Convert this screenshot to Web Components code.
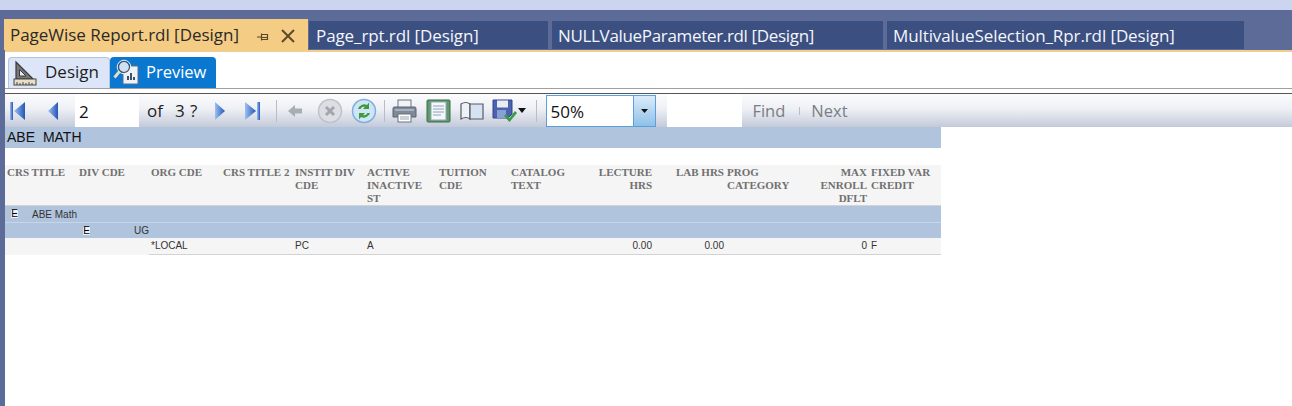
<!DOCTYPE html>
<html><head><meta charset="utf-8"><style>
html,body{margin:0;padding:0;height:406px;overflow:hidden;background:#fff;font-family:"Open Sans","Noto Sans",sans-serif}
</style></head><body>
<vs-window>
  <doc-tabs slot="tabs"></doc-tabs>
  <view-tabs slot="views"></view-tabs>
  <report-toolbar slot="toolbar"></report-toolbar>
  <report-body slot="body"></report-body>
</vs-window>
<script>
function def(name,html){customElements.define(name,class extends HTMLElement{constructor(){super();this.attachShadow({mode:'open'}).innerHTML=html;}});}

def('vs-window',`<style>
:host{display:flex;flex-direction:column;width:1292px;height:406px;background:#5d6b99;overflow:hidden}
.top{height:10px;background:#ccd5f0;flex:none}
.main{flex:1;display:flex;flex-direction:column;padding-left:5px;min-height:0}
.rest{flex:1;background:#fff;display:flex;flex-direction:column;min-height:0}
</style><div class="top"></div><div class="main"><slot name="tabs"></slot><div class="rest"><slot name="views"></slot><slot name="toolbar"></slot><slot name="body"></slot></div></div>`);

def('doc-tabs',`<style>
:host{display:block;padding-top:9px;margin-left:-1px}
.row{display:flex;height:31px;align-items:flex-end;gap:4px}
.tab{height:28px;margin-bottom:1px;background:#3b4f81;color:#f4f6fb;font-size:17px;letter-spacing:-.1px;line-height:30px;padding-left:6px;box-sizing:border-box;white-space:nowrap;overflow:hidden;flex:none}
.active{height:31px;margin:0 -3px 0 0;width:304px;background:#f5cc84;color:#2a2a2a;letter-spacing:-.03px;line-height:35px;padding-left:6px;display:flex;align-items:center}
.active span{width:246px;flex:none}
.line{height:2px;background:#f0cf8e;margin-left:1px}
svg{display:block;flex:none}
</style><div class="row">
<div class="tab active"><span>PageWise Report.rdl [Design]</span>
<svg width="14" height="14" viewBox="0 0 14 14" style="margin-top:4px"><path d="M1 7H5.500M5.500 3.500V10.500M6 4.500H11.500V9.500H6M6 7.500H11.500" fill="none" stroke="#5a4a2a" stroke-width="1.200"/></svg>
<svg width="16" height="16" viewBox="0 0 16 16" style="margin:3px 0 0 10px"><path d="M2 2L14 14M14 2L2 14" stroke="#5a4a2a" stroke-width="2"/></svg></div>
<div class="tab" style="width:239px;padding-left:7px">Page_rpt.rdl [Design]</div>
<div class="tab" style="width:331px;letter-spacing:-.33px">NULLValueParameter.rdl [Design]</div>
<div class="tab" style="width:357px">MultivalueSelection_Rpr.rdl [Design]</div>
</div><div class="line"></div>`);

def('view-tabs',`<style>
:host{display:block;height:37px;box-sizing:border-box;border-bottom:1px solid #a0a0a0}
.row{display:flex;padding:5px 0 0 3px;height:36px;box-sizing:border-box}
.t{height:31px;display:flex;align-items:center;font-size:17px;line-height:28px;box-sizing:border-box;border-radius:4px 4px 0 0}
.t span{display:block;margin-top:-2px}
.d{width:102px;background:#dce6f8;border:1px solid #b4c4de;border-bottom:0;color:#1e1e1e;padding-left:4px;gap:8px}
.p{width:106px;background:#0a78d0;color:#fff;padding-left:3px;gap:7px;font-size:16.500px}
svg{display:block;flex:none}
</style><div class="row">
<div class="t d"><svg width="24" height="27" viewBox="0 0 24 27"><path d="M3 2L3 19L20 19Z" fill="#77777a" stroke="#3a3a3a" stroke-width="1.200"/><path d="M6.500 9.500L6.500 16H13Z" fill="#e4ebf7" stroke="#3a3a3a"/><rect x="1" y="19" width="22" height="6" fill="#e8dfc8" stroke="#444"/><path d="M4 22V25M7 23V25M10 22V25M13 23V25M16 22V25M19 23V25" stroke="#444"/></svg><span>Design</span></div>
<div class="t p"><svg width="26" height="27" viewBox="0 0 26 27"><rect x="10" y="7" width="15" height="18" fill="#eef2f7" stroke="#5d6f8a"/><path d="M15 21V17M18 21V14M21 21V18" stroke="#39506e" stroke-width="2"/><circle cx="11" cy="8" r="5.500" fill="#cfe0f4" stroke="#3d4a5c" stroke-width="1.200"/><circle cx="11" cy="8" r="6.800" fill="none" stroke="#eaeff4"/><path d="M6.500 12.500L1.500 18.500" stroke="#e8dcc6" stroke-width="2.800"/></svg><span>Preview</span></div>
</div>`);

def('report-toolbar',`<style>
:host{display:block;margin-top:4px;height:34px;box-sizing:border-box;border-top:1px solid #555;background:linear-gradient(#fcfcfd,#eef0f5 45%,#c3cad9)}
.row{display:flex;align-items:center;height:33px}
.i{flex:none;display:block}
.box{background:#fff;align-self:stretch;flex:none;font-size:17px;color:#111;line-height:35px;box-sizing:border-box}
.sep{width:1px;height:22px;background:#b9bdc7;flex:none}
.txt{font-size:17px;color:#1e1e1e;flex:none;white-space:nowrap;word-spacing:1px}
.combo{flex:none;width:110px;height:32px;border:1px solid #5aa0dc;box-sizing:border-box;background:#fff;display:flex}
.combo span{flex:1;font-size:17px;color:#111;line-height:32px;padding-left:3px}
.combo b{width:21px;background:linear-gradient(#dcecf8,#8ec0e8);border-left:1px solid #5aa0dc;display:flex;align-items:center;justify-content:center}
.off{font-size:16.500px;color:#7a7d85;flex:none}
</style><div class="row">
<svg class="i" style="margin-left:4px" width="18" height="20" viewBox="0 0 18 20"><defs><linearGradient id="b" x1="0" y1="0" x2="1" y2="0"><stop offset="0" stop-color="#9cc0f0"/><stop offset="1" stop-color="#2456b8"/></linearGradient></defs><rect x="1" y="1" width="3" height="18" fill="url(#b)"/><path d="M16 1V19L5 10Z" fill="url(#b)"/></svg>
<svg class="i" style="margin-left:20px" width="12" height="20" viewBox="0 0 12 20"><path d="M11 1V19L1 10Z" fill="url(#b)"/></svg>
<div class="box" style="width:64px;margin-left:16px;padding-left:4px">2</div>
<div class="txt" style="margin-left:8px">of</div>
<div class="txt" style="margin-left:12px">3 ?</div>
<svg class="i" style="margin-left:17px" width="12" height="20" viewBox="0 0 12 20"><path d="M1 1V19L11 10Z" fill="url(#b)"/></svg>
<svg class="i" style="margin-left:17px" width="18" height="20" viewBox="0 0 18 20"><path d="M2 1V19L13 10Z" fill="url(#b)"/><rect x="14" y="1" width="3" height="18" fill="url(#b)"/></svg>
<div class="sep" style="margin-left:15px"></div>
<svg class="i" style="margin-left:10px" width="16" height="14" viewBox="0 0 16 14"><path d="M1 7L8 1V4.500H15V9.500H8V13Z" fill="#a9adb4"/></svg>
<svg class="i" style="margin-left:14px" width="26" height="26" viewBox="0 0 26 26"><circle cx="13" cy="13" r="11.500" fill="#dcdee3" stroke="#bfc2c9" stroke-width="1.500"/><path d="M9 9L17 17M17 9L9 17" stroke="#a3a6ad" stroke-width="3"/></svg>
<svg class="i" style="margin-left:8px" width="26" height="26" viewBox="0 0 26 26"><circle cx="13" cy="13" r="11.500" fill="#cfe5f7" stroke="#7fb0dc" stroke-width="1.500"/><path d="M7 11A6.500 6.500 0 0 1 16 7L18 4.500V11H12L14 8.800A4 4 0 0 0 9.500 11Z" fill="#3f9a3c"/><path d="M19 15A6.500 6.500 0 0 1 10 19L8 21.500V15H14L12 17.200A4 4 0 0 0 16.500 15Z" fill="#3f9a3c"/></svg>
<div class="sep" style="margin-left:7px"></div>
<svg class="i" style="margin-left:7px" width="25" height="24" viewBox="0 0 25 24"><rect x="6" y="1" width="13" height="8" fill="#f2f3f6" stroke="#6b7482"/><path d="M2 8H23Q24 8 24 10V18H1V10Q1 8 2 8Z" fill="#7f8a99" stroke="#5b6573"/><rect x="3" y="10" width="19" height="2" fill="#a8b1bd"/><rect x="6" y="15" width="13" height="8" fill="#fff" stroke="#6b7482"/><path d="M8 18H17M8 20H17" stroke="#9aa3af"/></svg>
<svg class="i" style="margin-left:9px" width="25" height="24" viewBox="0 0 25 24"><rect x="1" y="1" width="23" height="22" rx="1" fill="#5f9a6c" stroke="#3a6b46"/><rect x="5" y="3" width="15" height="18" fill="#f5f7fa" stroke="#93a8b8"/><path d="M7 7H18M7 10H18M7 13H18M7 16H15" stroke="#8ea2b8"/></svg>
<svg class="i" style="margin-left:9px" width="24" height="20" viewBox="0 0 24 20"><path d="M1 3Q6 0 10 3V18Q6 15 1 18Z" fill="#eef1f5" stroke="#555c66" stroke-width="1.200"/><path d="M10 3H23V18H10Z" fill="#d6e2f3" stroke="#555c66" stroke-width="1.200"/></svg>
<svg class="i" style="margin-left:8px" width="26" height="24" viewBox="0 0 26 24"><path d="M1 1H20V15L16 19H1Z" fill="#4a62b0" stroke="#33458a"/><rect x="5" y="1.500" width="11" height="7" fill="#e8edf5"/><rect x="5" y="11" width="9" height="8" fill="#8a9fd2"/><path d="M14 15L17.500 19L23 12L25 14L17.500 23L12 17Z" fill="#3a9a45"/></svg>
<svg class="i" style="margin-left:0" width="8" height="5" viewBox="0 0 8 5"><path d="M0 0H8L4 5Z" fill="#111"/></svg>
<div class="sep" style="margin-left:10px"></div>
<div class="combo" style="margin-left:9px"><span>50%</span><b><svg width="7" height="4" viewBox="0 0 7 4"><path d="M0 0H7L3.500 4Z" fill="#111"/></svg></b></div>
<div class="box" style="width:75px;margin-left:11px"></div>
<div class="off" style="margin-left:10px">Find</div>
<div class="sep" style="margin-left:14px;height:8px"></div>
<div class="off" style="margin-left:11px">Next</div>
</div>`);

const cols=[['CRS TITLE'],['DIV CDE'],['ORG CDE'],['CRS TITLE 2'],['INSTIT DIV CDE'],['ACTIVE INACTIVE ST'],['TUITION CDE'],['CATALOG TEXT'],['LECTURE HRS',1],['LAB HRS',1],['PROG CATEGORY'],['MAX ENROLL DFLT',1],['FIXED VAR CREDIT']];
const vals={2:'*LOCAL',4:'PC',5:'A',8:'0.00',9:'0.00',11:'0',12:'F'};
def('report-body',`<style>
:host{display:block;width:936px;font-family:"Liberation Sans",Arial,sans-serif}
.band{height:21px;background:#b0c4de;font-size:14px;color:#111;line-height:21px;padding-left:2px;word-spacing:4px}
.gap{height:17px}
.grid{display:grid;grid-template-columns:repeat(13,72px)}
.h{height:41px;background:#f5f5f5;border-bottom:1px solid #d3d3d3;box-sizing:border-box;font:bold 11px/13px "Liberation Serif",serif;color:#707070;padding:1px 2px}
.h.x{padding-right:1px}
.r{text-align:right}
.g{background:#b0c4de;font-size:10px;color:#333;display:flex;box-sizing:border-box}
.g1{height:17px;line-height:17px;border-bottom:1px solid #c6d5e8;padding-left:6px;gap:14px}
.g2{height:15px;line-height:15px;padding-left:78px;gap:44px}
.e{align-self:center;width:7px;height:8px;line-height:8px;background:#eef2f8;color:#000;text-align:center}
.v{height:17px;box-sizing:border-box;background:#f5f5f5;font-size:10px;line-height:16px;color:#333;padding:0 2px;border-bottom:1px solid #d3d3d3}
.n{border-bottom-color:#f5f5f5}
.v.x{padding-right:1px}
</style>
<div class="band">ABE MATH</div><div class="gap"></div>
<div class="grid">${cols.map((c,i)=>`<div class="h${c[1]?' r':''}${i==8||i==9?' x':''}">${c[0]}</div>`).join('')}</div>
<div class="g g1"><span class="e">E</span><span>ABE Math</span></div>
<div class="g g2"><span class="e">E</span><span>UG</span></div>
<div class="grid">${cols.map((c,i)=>`<div class="v${i<2?' n':''}${c[1]?' r':''}${i==8||i==9?' x':''}">${vals[i]||''}</div>`).join('')}</div>`);
</script></body></html>
